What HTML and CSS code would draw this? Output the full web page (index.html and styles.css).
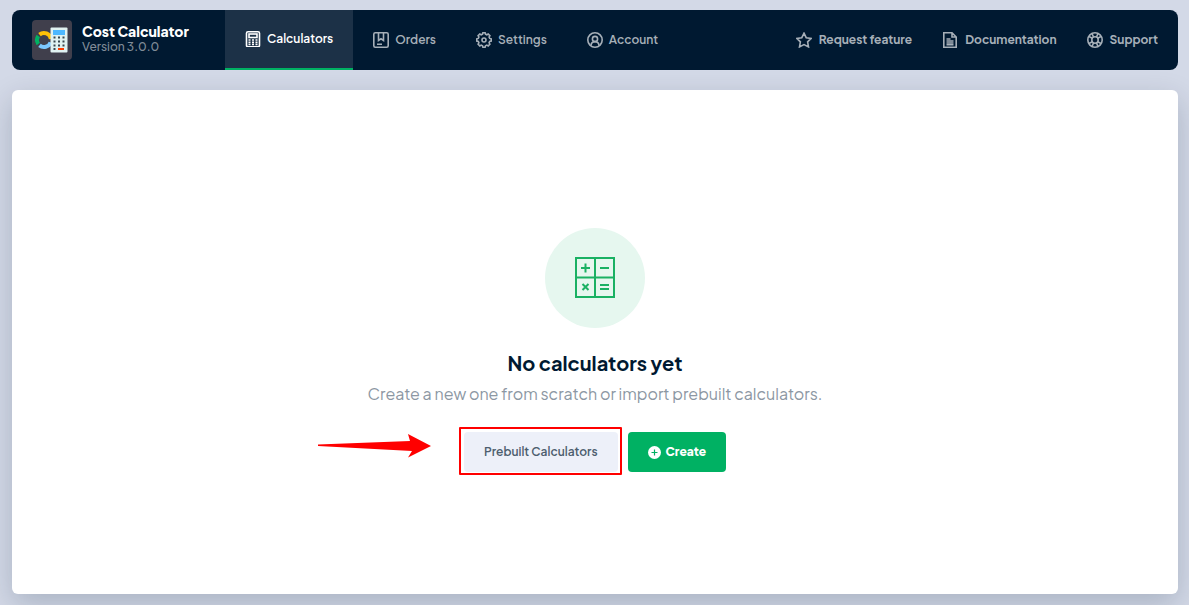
FILE: index.html
```
<!DOCTYPE html>
<html lang="en">
<head>
    <meta charset="UTF-8">
    <meta name="viewport" content="width=device-width, initial-scale=1.0">
    <title>Cost Calculator</title>
    <link rel="stylesheet" href="styles.css">
</head>
<body>
    <header class="header">
        <div class="brand">
            <svg class="logo" viewBox="0 0 40 40" aria-hidden="true">
                <rect width="40" height="40" rx="4" fill="#403f4c"/>
                <g fill="none" stroke-width="4">
                    <path d="M6.300 16 A7 7 0 0 0 6.300 24" stroke="#00b163"/>
                    <path d="M7.500 14.600 A7 7 0 0 1 18.900 19" stroke="#ffc107"/>
                    <path d="M7.500 25.400 A7 7 0 0 0 18.600 22.400" stroke="#7cc8ff"/>
                </g>
                <rect x="18.500" y="7.500" width="17" height="25" rx="1" fill="#e0f2f1"/>
                <rect x="21" y="10" width="12" height="5" fill="#4db8ff"/>
                <path d="M21.500 17.500h11M21.500 21.500h11M21.500 25.500h11" stroke="#37474f" stroke-width="2" stroke-dasharray="2 2.500"/>
                <path d="M21.500 29h2" stroke="#37474f" stroke-width="2"/>
                <path d="M26 29h6" stroke="#ff3d00" stroke-width="2"/>
            </svg>
            <div class="brand-text">
                <div class="brand-name">Cost Calculator</div>
                <div class="brand-version">Version 3.0.0</div>
            </div>
        </div>

        <nav class="tabs">
            <a class="tab active" href="#calculators">
                <svg class="icon" viewBox="0 0 16 16">
                    <rect x="1.500" y=".8" width="13" height="15" rx="1.500"/>
                    <rect x="4" y="3" width="8" height="3.500"/>
                    <path d="M3.500 9h2M7 9h2M10.500 9h2M3.500 11.200h2M7 11.200h2M10.500 11.200h2M3.500 13.400h2M7 13.400h2M10.500 13.400h2"/>
                </svg>
                Calculators
            </a>
            <a class="tab" href="#orders">
                <svg class="icon" viewBox="0 0 16 16">
                    <rect x=".8" y=".8" width="14.400" height="14.400" rx="1.500"/>
                    <path d="M5.500 1v7.500L8 6.800l2.500 1.700V1M4 12.300h5"/>
                </svg>
                Orders
            </a>
            <a class="tab" href="#settings">
                <svg class="icon" viewBox="0 0 16 16">
                    <path d="M6.500 2.200 6.900.7h2.200l.4 1.500 1.300.6 1.400-.8 1.700 1.700-.8 1.400.6 1.300 1.500.4v2.300l-1.500.4-.6 1.300.8 1.400-1.700 1.700-1.400-.8-1.300.6-.4 1.500H6.900l-.4-1.500-1.300-.6-1.400.8-1.700-1.700.8-1.400-.6-1.300L.8 9.100V6.800l1.500-.4.6-1.300-.8-1.400L3.800 2l1.400.8z"/>
                    <circle cx="8" cy="8" r="2"/>
                </svg>
                Settings
            </a>
            <a class="tab" href="#account">
                <svg class="icon" viewBox="0 0 16 16">
                    <circle cx="8" cy="8" r="7.200"/>
                    <circle cx="8" cy="7" r="2.600"/>
                    <path d="M4 13.500c.2-2.500 1.800-3.900 4-3.900s3.800 1.400 4 3.900"/>
                </svg>
                Account
            </a>
        </nav>

        <nav class="links">
            <a class="link" href="#feature">
                <svg class="icon" viewBox="0 0 16 16">
                    <path d="m8 1.200 2.200 4.500 5 .7-3.600 3.500.9 5L8 12.600l-4.500 2.300.9-5L.8 6.400l5-.7z"/>
                </svg>
                Request feature
            </a>
            <a class="link" href="#docs">
                <svg class="icon" viewBox="0 0 16 16">
                    <path d="M10 .8H1.800v14.400h12.400V5L10 .8V5h4.200M4.500 7h4M4.500 9h7M4.500 11h7M4.500 12.800h7"/>
                </svg>
                Documentation
            </a>
            <a class="link" href="#support">
                <svg class="icon" viewBox="0 0 16 16">
                    <circle cx="8" cy="8" r="7.200"/>
                    <circle cx="8" cy="8" r="3.200"/>
                    <path d="M5 1.500 6.500 5M2 4.500l3.300 1.700M11 1.500 9.500 5M14 4.500l-3.300 1.700M5 14.500 6.500 11M2 11.500l3.300-1.700M11 14.500 9.500 11M14 11.500l-3.300-1.700"/>
                </svg>
                Support
            </a>
        </nav>
    </header>

    <main class="card">
        <div class="empty-icon">
            <svg width="42" height="42" viewBox="0 0 42 42" fill="none" stroke="#1ab163" stroke-width="2" aria-hidden="true">
                <path d="M2 1h38v39H2zM21 1v39M2 20.500h38"/>
                <path d="M7 11h9M11.500 6.500v9M26 11h9M8.500 27l6 6M14.500 27l-6 6M26 28h9M26 32h9"/>
            </svg>
        </div>
        <h1 class="title">No calculators yet</h1>
        <p class="text">Create a new one from scratch or import prebuilt calculators.</p>
        <div class="actions">
            <div class="highlight">
                <svg class="arrow" viewBox="0 0 114 24" aria-hidden="true">
                    <path d="M0 10.500 L92 7 L90 0 L113 12 L90 23.500 L94 17 L0 12 z" fill="#f00"/>
                </svg>
                <button class="btn btn-light" type="button">Prebuilt Calculators</button>
            </div>
            <button class="btn btn-create" type="button">
                <svg width="13" height="13" viewBox="0 0 13 13" aria-hidden="true">
                    <circle cx="6.500" cy="6.500" r="6.500" fill="#fff"/>
                    <path d="M3.500 6.500h6M6.500 3.500v6" stroke="#00b163" stroke-width="1.200"/>
                </svg>
                Create
            </button>
        </div>
    </main>
</body>
</html>
```

FILE: styles.css
```
* {
    box-sizing: border-box;
}

body {
    font-family: 'Plus Jakarta Sans', Inter, sans-serif;
    background-color: #d3d9e7;
    display: flex;
    flex-direction: column;
    gap: 20px;
    min-height: 100vh;
    margin: 0;
    padding: 10px 11px 11px 12px;
}

.header {
    display: flex;
    height: 60px;
    padding: 0 20px;
    background-color: #001931;
    border-radius: 8px;
}

.brand {
    display: flex;
    align-items: center;
    gap: 10px;
    min-width: 193px;
}

.logo {
    width: 40px;
    height: 40px;
}

.brand-text {
    padding-bottom: 4px;
}

.brand-name {
    font-size: 14px;
    font-weight: 800;
    line-height: 16px;
    color: #fff;
}

.brand-version {
    font-size: 12px;
    font-weight: 500;
    line-height: 15px;
    color: #808c98;
}

.tabs {
    display: flex;
}

.tab,
.link {
    display: flex;
    align-items: center;
    gap: 6px;
    font-size: 12px;
    font-weight: 600;
    line-height: 18px;
    color: #a6afb8;
    text-decoration: none;
    white-space: nowrap;
}

.tab {
    padding: 0 20px;
}

.tab.active {
    background-color: #1c3147;
    border-bottom: 2px solid #00b163;
    color: #fff;
}

.links {
    display: flex;
    gap: 30px;
    margin-left: auto;
}

.link {
    gap: 7px;
    font-weight: 700;
}

.icon {
    width: 16px;
    height: 16px;
    fill: none;
    stroke: currentColor;
    stroke-width: 1.6;
}

.card {
    flex: 1;
    display: flex;
    flex-direction: column;
    align-items: center;
    justify-content: center;
    padding-top: 16px;
    background-color: #fff;
    border-radius: 6px;
    box-shadow: 0 10px 30px rgba(0, 25, 49, 0.2);
}

.empty-icon {
    display: flex;
    align-items: center;
    justify-content: center;
    width: 100px;
    height: 100px;
    border-radius: 50%;
    background-color: #e6f7ef;
}

.title {
    margin: 23px 0 9px;
    font-size: 20px;
    font-weight: 700;
    line-height: 24px;
    color: #001931;
}

.text {
    margin: 0 0 28px;
    font-size: 16px;
    font-weight: 400;
    line-height: 20px;
    color: #8c97a3;
}

.actions {
    display: flex;
    gap: 10px;
}

.highlight {
    position: relative;
}

/* red frame around the button */
.highlight::after {
    content: '';
    position: absolute;
    inset: -5px -4px -3px -5px;
    border: 2px solid #f00;
    border-radius: 1px;
    pointer-events: none;
}

.arrow {
    position: absolute;
    top: 2px;
    right: calc(100% + 32px);
    width: 114px;
    height: 24px;
}

.btn {
    display: flex;
    align-items: center;
    gap: 5px;
    height: 40px;
    padding: 0 20px;
    border: none;
    border-radius: 4px;
    font-family: inherit;
    font-size: 12px;
    line-height: 18px;
    cursor: pointer;
}

.btn-light {
    background-color: #edf0f9;
    color: #4d5e6f;
    font-weight: 600;
}

.btn-create {
    background-color: #00b163;
    color: #fff;
    font-weight: 800;
}
```
